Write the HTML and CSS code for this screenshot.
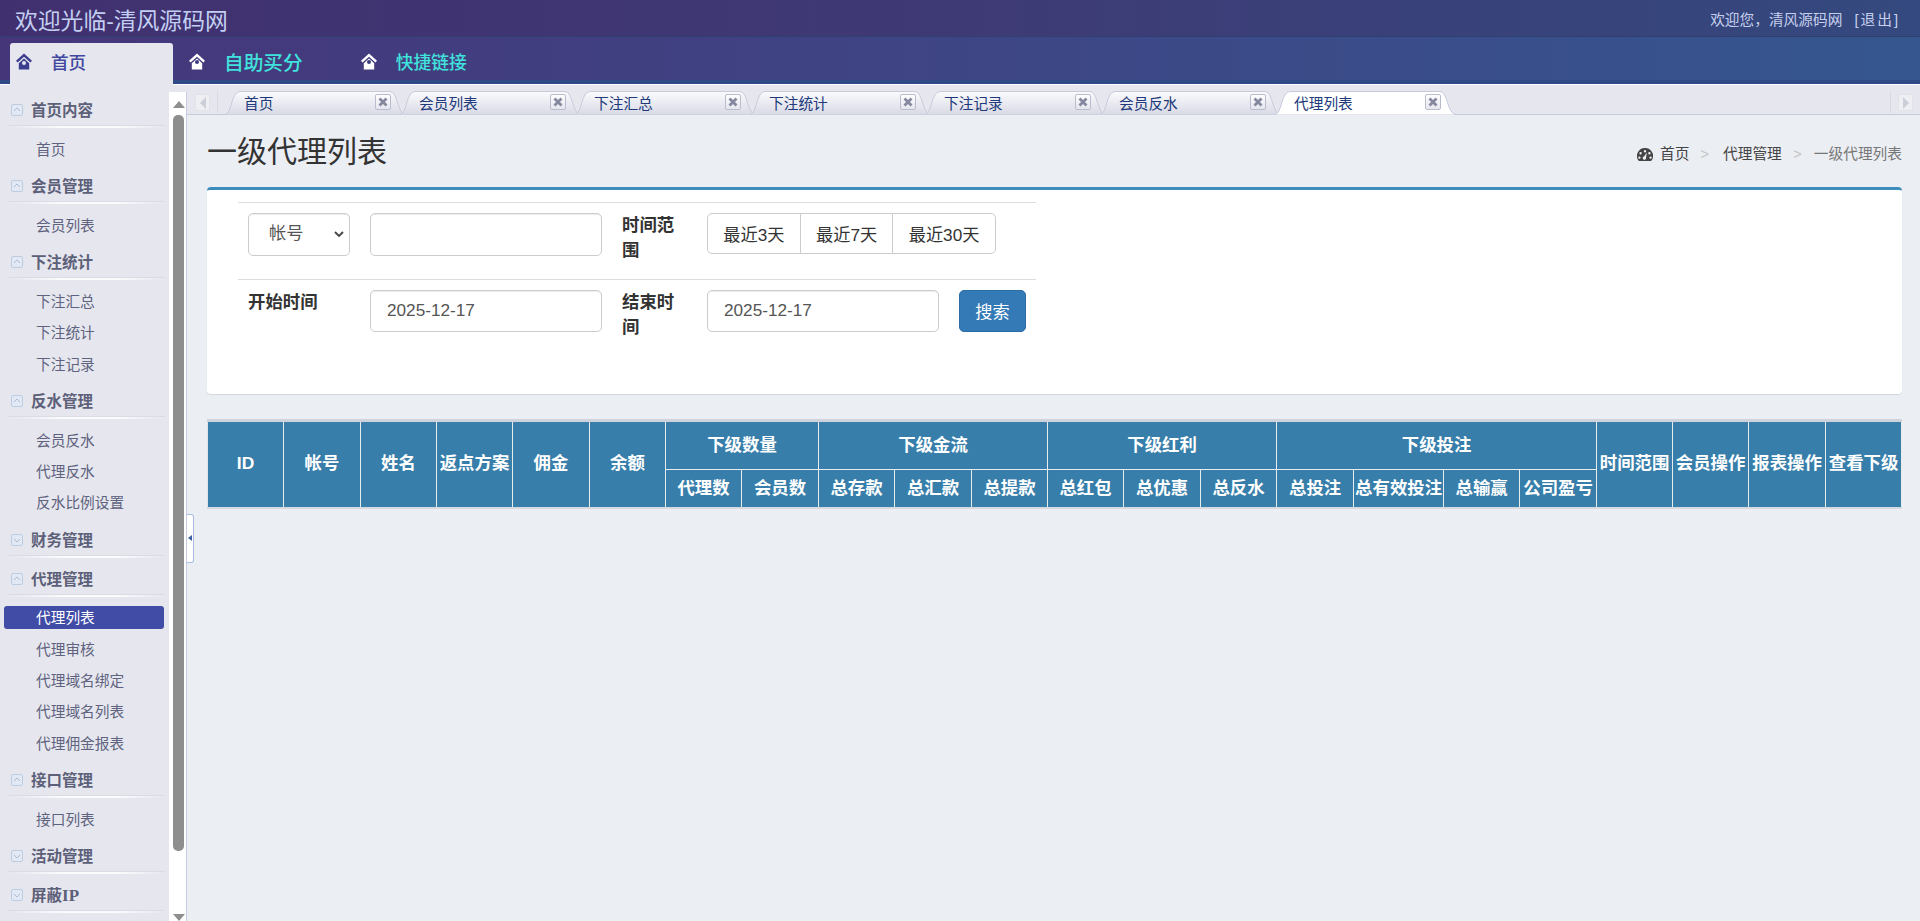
FILE: index.html
```html
<!DOCTYPE html>
<html lang="zh-CN">
<head>
<meta charset="utf-8">
<title>欢迎光临-清风源码网</title>
<link rel="stylesheet" href="styles.css">
</head>
<body>
<svg class="defs" aria-hidden="true">
  <defs>
    <linearGradient id="tabg" x1="0" y1="0" x2="0" y2="1">
      <stop offset="0" stop-color="#fbfbfd"/>
      <stop offset="1" stop-color="#d9dae6"/>
    </linearGradient>
    <linearGradient id="closeg" x1="0" y1="0" x2="0" y2="1">
      <stop offset="0" stop-color="#ffffff"/>
      <stop offset="1" stop-color="#e4e5ee"/>
    </linearGradient>
    <symbol id="home" viewBox="0 0 16 17">
      <path d="M8 0.5 L16 7.8 L14.4 9.6 L8 3.8 L1.6 9.6 L0 7.8 Z"/>
      <path d="M2.8 10.2 L8 5.4 L13.2 10.2 V16.5 H2.8 Z"/>
    </symbol>
    <symbol id="tabshape" viewBox="0 0 182 24">
      <path d="M0 23.5 C7 23 6 0.5 15 0.5 H165 C173 0.5 172 23 181 23.5"/>
    </symbol>
    <symbol id="close" viewBox="0 0 16 16">
      <rect x="0.5" y="0.5" width="15" height="15" rx="1.5" fill="url(#closeg)" stroke="#b9bccd"/>
      <path d="M4.5 4.5 L11.5 11.5 M11.5 4.5 L4.5 11.5" stroke="#85889f" stroke-width="2.8" fill="none"/>
    </symbol>
    <symbol id="sec-up" viewBox="0 0 12 12">
      <rect x="0.5" y="0.5" width="11" height="11" rx="1.5" fill="#e2e9f4" stroke="#bccde2"/>
      <path d="M3 7 L6 4 L9 7" stroke="#a9bdd6" fill="none"/>
    </symbol>
    <symbol id="sec-down" viewBox="0 0 12 12">
      <rect x="0.5" y="0.5" width="11" height="11" rx="1.5" fill="#e2e9f4" stroke="#bccde2"/>
      <path d="M3 5 L6 8 L9 5" stroke="#a9bdd6" fill="none"/>
    </symbol>
  </defs>
</svg>

<header class="topbar">
  <div class="site-title">欢迎光临-清风源码网</div>
  <div class="user-info">欢迎您，清风源码网 <span class="logout">[退出]</span></div>
</header>

<nav class="navbar">
  <a class="nav-active"><svg class="home home-dark"><use href="#home"/></svg><i class="door door-dark"></i><span>首页</span></a>
  <a class="nav-link nav-first"><svg class="home"><use href="#home"/></svg><i class="door"></i><span class="nav-big">自助买分</span></a>
  <a class="nav-link nav-second"><svg class="home"><use href="#home"/></svg><i class="door"></i><span class="nav-small">快捷链接</span></a>
</nav>

<div class="main">
  <aside class="sidebar">
    <section><h3 class="sec-head"><svg class="sec-icon"><use href="#sec-up"/></svg>首页内容</h3>
      <ul class="sec-list"><li><a>首页</a></li></ul></section>
    <section><h3 class="sec-head"><svg class="sec-icon"><use href="#sec-up"/></svg>会员管理</h3>
      <ul class="sec-list"><li><a>会员列表</a></li></ul></section>
    <section><h3 class="sec-head"><svg class="sec-icon"><use href="#sec-up"/></svg>下注统计</h3>
      <ul class="sec-list"><li><a>下注汇总</a></li><li><a>下注统计</a></li><li><a>下注记录</a></li></ul></section>
    <section><h3 class="sec-head"><svg class="sec-icon"><use href="#sec-up"/></svg>反水管理</h3>
      <ul class="sec-list"><li><a>会员反水</a></li><li><a>代理反水</a></li><li><a>反水比例设置</a></li></ul></section>
    <section><h3 class="sec-head"><svg class="sec-icon"><use href="#sec-down"/></svg>财务管理</h3></section>
    <section><h3 class="sec-head"><svg class="sec-icon"><use href="#sec-up"/></svg>代理管理</h3>
      <ul class="sec-list"><li><a class="current">代理列表</a></li><li><a>代理审核</a></li><li><a>代理域名绑定</a></li><li><a>代理域名列表</a></li><li><a>代理佣金报表</a></li></ul></section>
    <section><h3 class="sec-head"><svg class="sec-icon"><use href="#sec-up"/></svg>接口管理</h3>
      <ul class="sec-list"><li><a>接口列表</a></li></ul></section>
    <section><h3 class="sec-head"><svg class="sec-icon"><use href="#sec-down"/></svg>活动管理</h3></section>
    <section><h3 class="sec-head"><svg class="sec-icon"><use href="#sec-down"/></svg>屏蔽<span class="sec-latin">IP</span></h3></section>
  </aside>

  <div class="scrollbar">
    <span class="arrow-up"></span>
    <span class="thumb"></span>
    <span class="arrow-down"></span>
  </div>

  <div class="content">
    <button class="collapse-handle" aria-label="收起"><i></i></button>
    <div class="tabbar">
      <span class="tab-btn"><i class="tri-left"></i></span>
      <span class="tab-sep"></span>
      <div class="tabs">
        <div class="tab"><svg class="tab-bg"><use href="#tabshape"/></svg><span>首页</span><svg class="tab-close"><use href="#close"/></svg></div>
        <div class="tab"><svg class="tab-bg"><use href="#tabshape"/></svg><span>会员列表</span><svg class="tab-close"><use href="#close"/></svg></div>
        <div class="tab"><svg class="tab-bg"><use href="#tabshape"/></svg><span>下注汇总</span><svg class="tab-close"><use href="#close"/></svg></div>
        <div class="tab"><svg class="tab-bg"><use href="#tabshape"/></svg><span>下注统计</span><svg class="tab-close"><use href="#close"/></svg></div>
        <div class="tab"><svg class="tab-bg"><use href="#tabshape"/></svg><span>下注记录</span><svg class="tab-close"><use href="#close"/></svg></div>
        <div class="tab"><svg class="tab-bg"><use href="#tabshape"/></svg><span>会员反水</span><svg class="tab-close"><use href="#close"/></svg></div>
        <div class="tab tab-active"><svg class="tab-bg"><use href="#tabshape"/></svg><span>代理列表</span><svg class="tab-close"><use href="#close"/></svg></div>
      </div>
      <span class="tab-sep tab-sep-right"></span>
      <span class="tab-btn tab-btn-right"><i class="tri-right"></i></span>
    </div>

    <div class="page">
      <div class="page-head">
        <h1>一级代理列表</h1>
        <ol class="crumbs">
          <li class="crumb-home">
            <svg class="gauge" viewBox="0 0 16 13"><path fill-rule="evenodd" d="M8 0 A8 8 0 0 1 14.6 12.6 L13.8 13 H2.2 L1.4 12.6 A8 8 0 0 1 8 0 Z M8 2 A1.2 1.2 0 1 0 8 4.4 A1.2 1.2 0 1 0 8 2 Z M3.6 4 A1.2 1.2 0 1 0 3.6 6.4 A1.2 1.2 0 1 0 3.6 4 Z M12.4 4 A1.2 1.2 0 1 0 12.4 6.4 A1.2 1.2 0 1 0 12.4 4 Z M2.4 8.4 A1.2 1.2 0 1 0 2.4 10.8 A1.2 1.2 0 1 0 2.4 8.4 Z M13.6 8.4 A1.2 1.2 0 1 0 13.6 10.8 A1.2 1.2 0 1 0 13.6 8.4 Z M10 4.6 L7 8.4 A1.7 1.7 0 1 0 9 9.4 Z"/></svg>
            首页</li>
          <li class="crumb-sep">&gt;</li>
          <li>代理管理</li>
          <li class="crumb-sep">&gt;</li>
          <li class="crumb-last">一级代理列表</li>
        </ol>
      </div>

      <div class="box">
        <table class="search-table">
          <colgroup><col class="c1"><col class="c2"><col class="c3"><col class="c4"></colgroup>
          <tr>
            <td><div class="select-wrap"><select class="field field-select"><option>帐号</option></select><svg class="select-chev" viewBox="0 0 10 6"><path d="M1 1 L5 5 L9 1"/></svg></div></td>
            <td><input class="field field-input" type="text"></td>
            <td><label>时间范围</label></td>
            <td><div class="btn-group"><button>最近3天</button><button>最近7天</button><button>最近30天</button></div></td>
          </tr>
          <tr>
            <td><label>开始时间</label></td>
            <td><input class="field field-input field-date" type="text" value="2025-12-17"></td>
            <td><label>结束时间</label></td>
            <td><div class="date-row"><input class="field field-input field-date" type="text" value="2025-12-17"><button class="btn-search">搜索</button></div></td>
          </tr>
        </table>
      </div>

      <table class="data-table">
        <colgroup>
          <col class="w76"><col class="w77"><col class="w76"><col class="w76"><col class="w77"><col class="w76">
          <col class="w76"><col class="w77">
          <col class="w76"><col class="w77"><col class="w76">
          <col class="w76"><col class="w77"><col class="w76">
          <col class="w77"><col class="w90"><col class="w76"><col class="w77">
          <col class="w76"><col class="w76"><col class="w77"><col class="w76">
        </colgroup>
        <thead>
          <tr class="r1">
            <th rowspan="2">ID</th><th rowspan="2">帐号</th><th rowspan="2">姓名</th><th rowspan="2">返点方案</th><th rowspan="2">佣金</th><th rowspan="2">余额</th>
            <th colspan="2">下级数量</th><th colspan="3">下级金流</th><th colspan="3">下级红利</th><th colspan="4">下级投注</th>
            <th rowspan="2">时间范围</th><th rowspan="2">会员操作</th><th rowspan="2">报表操作</th><th rowspan="2">查看下级</th>
          </tr>
          <tr class="r2">
            <th>代理数</th><th>会员数</th><th>总存款</th><th>总汇款</th><th>总提款</th><th>总红包</th><th>总优惠</th><th>总反水</th><th>总投注</th><th>总有效投注</th><th>总输赢</th><th>公司盈亏</th>
          </tr>
        </thead>
      </table>
    </div>
  </div>
</div>
</body>
</html>
```
FILE: styles.css
```css
* { box-sizing: border-box; }
html, body { margin: 0; padding: 0; height: 100%; overflow: hidden; }
body {
  display: flex;
  flex-direction: column;
  height: 921px;
  font-family: "Liberation Sans", "Noto Sans CJK SC", sans-serif;
  background: #ebeef3;
  color: #333;
}
.defs { position: absolute; width: 0; height: 0; }

/* top bar */
.topbar {
  height: 37px;
  flex: none;
  display: flex;
  align-items: center;
  justify-content: space-between;
  padding: 0 20px 0 15px;
  background: linear-gradient(90deg, #41306f 0%, #3e3a75 50%, #34497f 100%);
  border-bottom: 1px solid #2f3f70;
}
.site-title { font-size: 22.8px; color: #c3cff2; line-height: 36px; padding-top: 5px; }
.user-info { font-size: 14.7px; color: #c6d0ee; }
.logout { margin-left: 8px; letter-spacing: 2px; }

/* nav */
.navbar {
  height: 48px;
  flex: none;
  display: flex;
  align-items: flex-end;
  padding-left: 10px;
  background: linear-gradient(90deg, #45367a 0%, #3e4585 50%, #35568f 100%);
  border-bottom: 1px solid #fff;
  box-shadow: inset 0 -4px 0 #2f4a85;
  position: relative;
}
.nav-active {
  position: relative;
  width: 163px;
  height: 42px;
  margin-bottom: -1px;
  display: flex;
  align-items: center;
  padding: 0 0 5px 6px;
  gap: 19px;
  background: #e6e7ee;
  border-radius: 3px 3px 0 0;
  font-size: 17.6px;
  font-weight: 500;
  color: #3f479f;
  z-index: 1;
}
.nav-link {
  position: relative;
  display: flex;
  align-items: center;
  gap: 19px;
  height: 42px;
  padding-bottom: 4px;
  color: #40e2dc;
  font-weight: 500;
}
.nav-first { margin-left: 16px; }
.nav-second { margin-left: 58px; }
.nav-big { font-size: 19.7px; }
.nav-small { font-size: 17.8px; }
.home { width: 16px; height: 17px; fill: #fff; flex: none; }
.home-dark { fill: #3d3d8f; }
.door { position: absolute; width: 4px; height: 4px; border-radius: 50%; background: #3c3c80; top: 18px; left: 6px; }
.door-dark { background: #e6e7ee; left: 12px; }

/* main */
.main { flex: 1; display: flex; min-height: 0; position: relative; }

.sidebar {
  width: 169px;
  flex: none;
  padding-top: 10px;
  background: #e6e7ee;
  overflow: hidden;
}
.sec-head {
  position: relative;
  height: 32px;
  margin: 0 0 7px;
  padding-left: 31px;
  display: flex;
  align-items: center;
  font-size: 15.5px;
  line-height: 1;
  font-weight: 700;
  font-family: "Liberation Serif", "Noto Sans CJK SC", serif;
  color: #5d6079;
}
.sec-latin { font-size: 17px; }
.sec-head::after {
  content: "";
  position: absolute;
  left: 8px;
  right: 4px;
  bottom: -1px;
  height: 2px;
  background: linear-gradient(90deg, transparent, #fbfbfd 35%, #fbfbfd 70%, transparent);
  border-top: 1px solid #d9dbe5;
}
.sec-icon { position: absolute; left: 11px; top: 9px; width: 12px; height: 12px; }
.sec-list { list-style: none; margin: 0; padding: 1px 0 4.8px; }
.sec-list li { height: 31.3px; padding: 4px 5px 4.3px 4px; }
.sec-list a {
  display: block;
  height: 23px;
  line-height: 23px;
  padding-left: 32px;
  font-size: 14.7px;
  color: #5f6380;
  border-radius: 3px;
}
.sec-list a.current { margin-top: -2px; line-height: 24px; background: #404ca6; color: #fff; }

/* fake scrollbar */
.scrollbar {
  width: 18px;
  flex: none;
  margin-top: 7px;
  padding-left: 2px;
  display: flex;
  flex-direction: column;
  align-items: center;
  background: #fff;
  border-right: 1px solid #c8cce2;
  position: relative;
  z-index: 2;
}
.arrow-up {
  margin-top: 9px;
  width: 0; height: 0;
  border-left: 6.5px solid transparent;
  border-right: 6.5px solid transparent;
  border-bottom: 7px solid #8e8e8e;
}
.thumb { width: 11px; height: 738px; margin-top: 7px; background: #8e8e8e; border-radius: 5px; }
.arrow-down {
  margin-top: 63px;
  width: 0; height: 0;
  border-left: 6.5px solid transparent;
  border-right: 6.5px solid transparent;
  border-top: 7px solid #8e8e8e;
}

/* content */
.content { flex: 1; min-width: 0; position: relative; display: flex; flex-direction: column; margin-left: -18px; }
.collapse-handle {
  position: absolute;
  left: 18px;
  top: 429px;
  width: 7px;
  height: 49px;
  padding: 0;
  background: #fff;
  border: 1px solid #a6bce2;
  border-left: 0;
  border-radius: 0 3px 3px 0;
  z-index: 3;
}
.collapse-handle i {
  position: absolute;
  left: 1px;
  top: 20px;
  width: 0; height: 0;
  border-top: 3px solid transparent;
  border-bottom: 3px solid transparent;
  border-right: 4px solid #3b5f9c;
}

.tabbar {
  height: 30px;
  flex: none;
  position: relative;
  display: flex;
  align-items: flex-start;
  padding-left: 26px;
  background: #e6e7ee;
}
.tabbar::after {
  content: "";
  position: absolute;
  left: 18px; right: 0; bottom: 0;
  height: 1px;
  background: #c8cada;
}
.tab-btn {
  width: 15px;
  height: 17px;
  margin-top: 9px;
  display: flex;
  align-items: center;
  justify-content: center;
  background: #eeeef3;
  border: 1px solid #e2e2e9;
  flex: none;
}
.tri-left { width: 0; height: 0; border-top: 6px solid transparent; border-bottom: 6px solid transparent; border-right: 6px solid #ccced8; }
.tri-right { width: 0; height: 0; border-top: 6px solid transparent; border-bottom: 6px solid transparent; border-left: 6px solid #ccced8; }
.tab-sep { width: 1px; height: 22px; margin: 6px 7px 0 7px; background: #d8d9e2; flex: none; }
.tab-sep-right { margin: 6px 7px 0 auto; }
.tab-btn-right { margin-right: 7px; }
.tabs { display: flex; padding-top: 6px; position: relative; z-index: 1; }
.tab {
  position: relative;
  width: 175px;
  height: 24px;
  flex: none;
  display: flex;
  align-items: center;
  justify-content: space-between;
  padding: 0 9px 2px 19px;
  font-size: 14.7px;
  color: #20397a;
}
.tab span, .tab-close { position: relative; }
.tab-bg {
  position: absolute;
  left: 0; top: 0;
  width: 182px;
  height: 24px;
  fill: url(#tabg);
  stroke: #c9cadb;
  stroke-width: 1;
}
.tab-close { width: 16px; height: 16px; flex: none; }
.tab-active .tab-bg { fill: #fff; }

.page { padding: 0 18px 0 38px; flex: 1; background: #ebeef3; }
.page-head {
  display: flex;
  justify-content: space-between;
  align-items: center;
  padding-top: 19px;
  margin-bottom: 17px;
}
h1 { margin: 0; font-size: 30px; font-weight: 400; line-height: 36px; color: #333; }
.crumbs {
  list-style: none;
  display: flex;
  align-items: center;
  margin: 0;
  padding: 4px 0 0;
  font-size: 14.7px;
  line-height: 18px;
  color: #444;
}
.crumb-home { display: flex; align-items: center; gap: 7px; }
.gauge { width: 16px; height: 13px; fill: #444; }
.crumb-sep { color: #c4c4c4; margin: 0 14px 0 11px; }
.crumb-sep:nth-child(4) { margin: 0 12px 0 11.5px; }
.crumb-last { color: #777; }

.box {
  height: 207px;
  padding: 12px 0 0 31px;
  background: #fff;
  border-top: 3px solid #3c8dbc;
  border-radius: 4px;
  box-shadow: 0 1px 1px rgba(0,0,0,.1);
}
.search-table { width: 798px; border-collapse: collapse; table-layout: fixed; }
.search-table .c1 { width: 122px; }
.search-table .c2 { width: 252px; }
.search-table .c3 { width: 85px; }
.search-table .c4 { width: 339px; }
.search-table tr { height: 77px; }
.search-table tr:first-child { height: 76.5px; }
.search-table td { padding: 10px; vertical-align: top; border-top: 1px solid #ddd; }
.search-table label { display: block; font-size: 17.4px; font-weight: 700; line-height: 25px; color: #333; }
.field {
  display: block;
  height: 43px;
  font: 17.2px "Liberation Sans", "Noto Sans CJK SC", sans-serif;
  color: #555;
  background: #fff;
  border: 1px solid #ccc;
  border-radius: 5px;
  box-shadow: inset 0 1px 1px rgba(0,0,0,.075);
}
.select-wrap { position: relative; width: 102px; }
.field-select { width: 102px; padding: 0 0 3px 20px; appearance: none; -webkit-appearance: none; }
.select-chev {
  position: absolute;
  right: 6px;
  top: 18px;
  width: 10px;
  height: 6px;
  fill: none;
  stroke: #444;
  stroke-width: 1.8;
  pointer-events: none;
}
.field-input { width: 232px; padding: 0 16px; }
.field-date { height: 42px; }
.date-row { display: flex; gap: 20px; }
.btn-group { display: flex; height: 41px; }
.btn-group button {
  height: 41px;
  padding: 0 15.3px;
  margin-left: -1px;
  font: 17.2px "Liberation Sans", "Noto Sans CJK SC", sans-serif;
  color: #333;
  background: #fff;
  border: 1px solid #ccc;
}
.btn-group button:first-child { margin-left: 0; border-radius: 5px 0 0 5px; }
.btn-group button:last-child { border-radius: 0 5px 5px 0; }
.btn-search {
  height: 42px;
  width: 67px;
  padding: 0;
  font: 17.2px "Liberation Sans", "Noto Sans CJK SC", sans-serif;
  color: #fff;
  background: #337ab7;
  border: 1px solid #2e6da4;
  border-radius: 5px;
}

.data-table {
  width: 1695px;
  margin-top: 25px;
  table-layout: fixed;
  border-collapse: collapse;
  border-top: 3px solid #ced3dc;
  border-bottom: 2px solid #d5d9e0;
  border-left: 1px solid #dfe3ea;
}
.w76 { width: 76px; }
.w77 { width: 77px; }
.w90 { width: 90px; }
.data-table th {
  padding: 0;
  background: #377eaa;
  color: #fff;
  font-size: 17.4px;
  font-weight: 700;
  line-height: 22px;
  text-align: center;
  white-space: nowrap;
  overflow: hidden;
  border: 1px solid #e9ecef;
  border-top: 0;
  border-bottom: 0;
}
.data-table .r1 { height: 49px; }
.data-table .r2 { height: 38px; }
.data-table .r2 th { border-top: 1px solid #e9ecef; }
.data-table .r1 th { padding-bottom: 2px; }
.data-table th:first-child { border-left: 0; }
```
